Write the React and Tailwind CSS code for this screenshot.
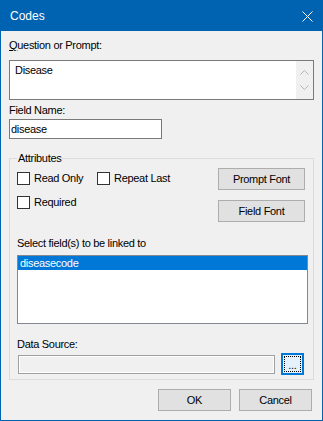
import React from "react";

const font = { fontFamily: '"Liberation Sans", Arial, sans-serif' };

function Checkbox({ label, w }) {
  return (
    <div className={`flex items-center gap-[4px] ${w || ""}`}>
      <div className="w-[13px] h-[13px] border border-[#333333] bg-white shrink-0" />
      <span className="leading-[13px]">{label}</span>
    </div>
  );
}

function Btn({ children, className = "" }) {
  return (
    <div
      className={`flex items-center justify-center border border-[#adadad] bg-[#e1e1e1] leading-[13px] ${className}`}
    >
      {children}
    </div>
  );
}

export default function App() {
  return (
    <div
      className="w-[323px] h-[421px] border border-[#0063b1] bg-[#f0f0f0] flex flex-col text-[11px] text-black tracking-[-0.3px] overflow-hidden"
      style={font}
    >
      {/* Title bar */}
      <div className="h-[30px] bg-[#0063b1] flex items-center justify-between pl-[9px] pr-[9px] shrink-0">
        <span
          className="text-white text-[12px] leading-[14px] tracking-normal"
          style={{ fontFamily: '"Segoe UI", "Liberation Sans", Arial, sans-serif' }}
        >
          Codes
        </span>
        <svg width="11" height="11" viewBox="0 0 11 11" className="mt-[0px]">
          <path d="M0.5 0.5 L10.5 10.5 M10.5 0.5 L0.5 10.5" stroke="white" strokeWidth="1" />
        </svg>
      </div>

      {/* Body */}
      <div className="flex flex-col px-[8px]">
        <div className="mt-[8px] leading-[13px]">
          <span className="underline underline-offset-[1px]">Q</span>uestion or Prompt:
        </div>

        <div className="mt-[8px] h-[40px] w-[305px] border border-[#7a7a7a] bg-white flex">
          <div className="flex-1 pl-[5px] pt-[3px] leading-[13px]">Disease</div>
          <div className="w-[17px] bg-[#f0f0f0] flex flex-col items-center justify-between py-[9px]">
            <svg width="9" height="5" viewBox="0 0 9 5">
              <polyline points="0.5,4.5 4.5,0.5 8.5,4.5" fill="none" stroke="#b4b4b4" strokeWidth="1" />
            </svg>
            <svg width="9" height="5" viewBox="0 0 9 5">
              <polyline points="0.5,0.5 4.5,4.5 8.5,0.5" fill="none" stroke="#b4b4b4" strokeWidth="1" />
            </svg>
          </div>
        </div>

        <div className="mt-[4px] leading-[13px]">Field Name:</div>
        <div className="mt-[2px] h-[20px] w-[153px] border border-[#7a7a7a] bg-white flex items-center pl-[1px] leading-[13px]">
          disease
        </div>

        {/* Group box */}
        <fieldset className="mt-[13px] w-[305px] border border-[#dcdcdc] pb-[4px]">
          <legend className="ml-[7px] px-[1px] leading-[13px]">Attributes</legend>

          <div className="flex justify-between pl-[7px] pr-[8px]">
            <div className="flex flex-col mt-[7px] gap-[11px]">
              <div className="flex">
                <Checkbox label="Read Only" w="w-[80px]" />
                <Checkbox label="Repeat Last" />
              </div>
              <Checkbox label="Required" />
            </div>
            <div className="flex flex-col mt-[3px] gap-[10px]">
              <Btn className="w-[87px] h-[22px]">Prompt Font</Btn>
              <Btn className="w-[87px] h-[22px]">Field Font</Btn>
            </div>
          </div>

          <div className="mt-[15px] ml-[7px] leading-[13px]">Select field(s) to be linked to</div>
          <div className="mt-[5px] ml-[7px] w-[291px] h-[69px] border border-[#828790] bg-white">
            <div className="h-[14px] bg-[#0078d7] text-white flex items-center pl-[2px] leading-[13px]">
              diseasecode
            </div>
          </div>

          <div className="mt-[14px] ml-[7px] leading-[13px]">Data Source:</div>
          <div className="mt-[2px] ml-[8px] flex items-center gap-[6px]">
            <div className="w-[257px] h-[19px] border border-[#a0a0a0] bg-[#f0f0f0] shadow-[inset_0_0_0_1px_#ffffff]" />
            <div className="w-[23px] h-[22px] border-2 border-[#0078d7] bg-[#e5f1fb] p-[1px]">
              <div className="w-full h-full border border-dotted border-black flex items-end justify-center leading-[10px] pb-[1px]">
                ...
              </div>
            </div>
          </div>
        </fieldset>
      </div>

      {/* Bottom buttons */}
      <div className="mt-[9px] flex justify-end gap-[8px] pr-[10px]">
        <Btn className="w-[73px] h-[22px]">OK</Btn>
        <Btn className="w-[73px] h-[22px]">Cancel</Btn>
      </div>
    </div>
  );
}
